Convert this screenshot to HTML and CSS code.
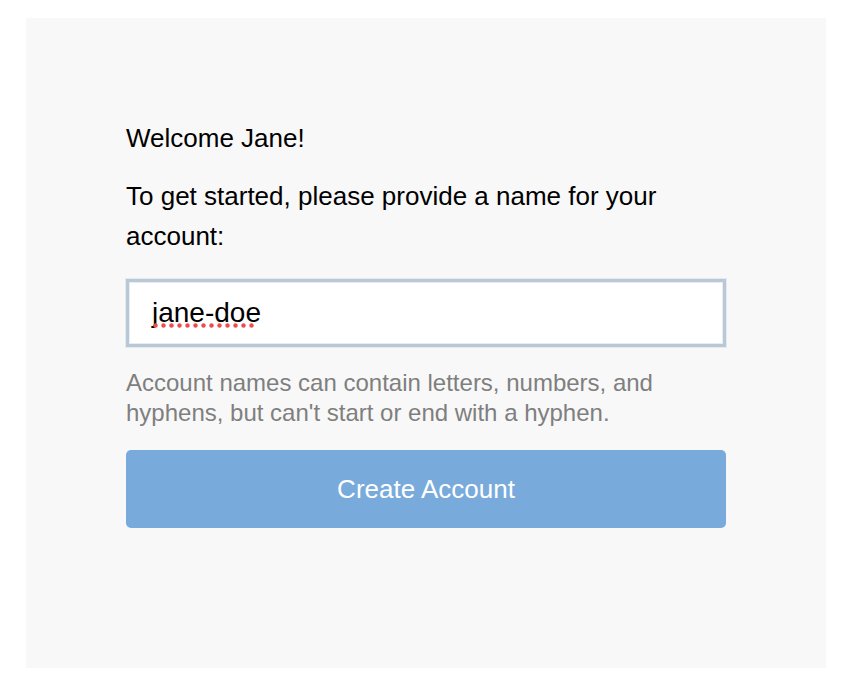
FILE: index.html
```html
<!DOCTYPE html>
<html lang="en">
<head>
<meta charset="utf-8">
<title>Create Account</title>
<link rel="stylesheet" href="styles.css">
</head>
<body>
<main class="panel">
  <div class="content">
    <p class="welcome">Welcome Jane!</p>
    <p class="prompt">To get started, please provide a name for your account:</p>
    <div class="field" role="textbox" aria-label="Account name"><span class="value">jane-doe</span></div>
    <p class="hint">Account names can contain letters, numbers, and hyphens, but can't start or end with a hyphen.</p>
    <button class="submit" type="button">Create Account</button>
  </div>
</main>
</body>
</html>
```
FILE: styles.css
```css
html, body {
  margin: 0;
  padding: 0;
  background: #ffffff;
}
body {
  padding: 18px 0 0 26px;
  font-family: "Liberation Sans", Arial, Helvetica, sans-serif;
}
.panel {
  box-sizing: border-box;
  width: 800px;
  height: 650px;
  background: #f8f8f8;
  padding: 100px 100px 0 100px;
}
.content {
  width: 600px;
  display: flex;
  flex-direction: column;
}
.welcome {
  margin: 0;
  font-size: 26px;
  line-height: 40px;
  color: #000;
}
.prompt {
  margin: 18px 0 0 0;
  font-size: 26px;
  line-height: 40px;
  color: #000;
}
.field {
  box-sizing: border-box;
  margin-top: 23px;
  height: 68px;
  border: 3px solid #bac8d5;
  box-shadow: 0 0 0 1px #e2eaf2, inset 0 0 0 1px #e6edf4;
  background: #fff;
  padding: 0 0 0 23px;
  display: flex;
  align-items: center;
  font-size: 28px;
  color: #000;
}
.value {
  position: relative;
}
.value::after {
  content: "";
  position: absolute;
  left: 1px;
  width: 104px;
  bottom: 1px;
  height: 5px;
  background-image: radial-gradient(circle at 2.5px 2.5px, #f04a4a 1.7px, rgba(240, 74, 74, 0.5) 2.2px, transparent 2.5px);
  background-size: 8px 5px;
  background-repeat: repeat-x;
}
.hint {
  margin: 21px 0 0 0;
  font-size: 24px;
  line-height: 30px;
  color: #7f7f7f;
}
.submit {
  margin-top: 22px;
  height: 78px;
  border: none;
  border-radius: 5px;
  background: #78abdb;
  color: #fff;
  font-family: "Liberation Sans", Arial, Helvetica, sans-serif;
  font-size: 26px;
  padding: 0;
  cursor: pointer;
}
```
